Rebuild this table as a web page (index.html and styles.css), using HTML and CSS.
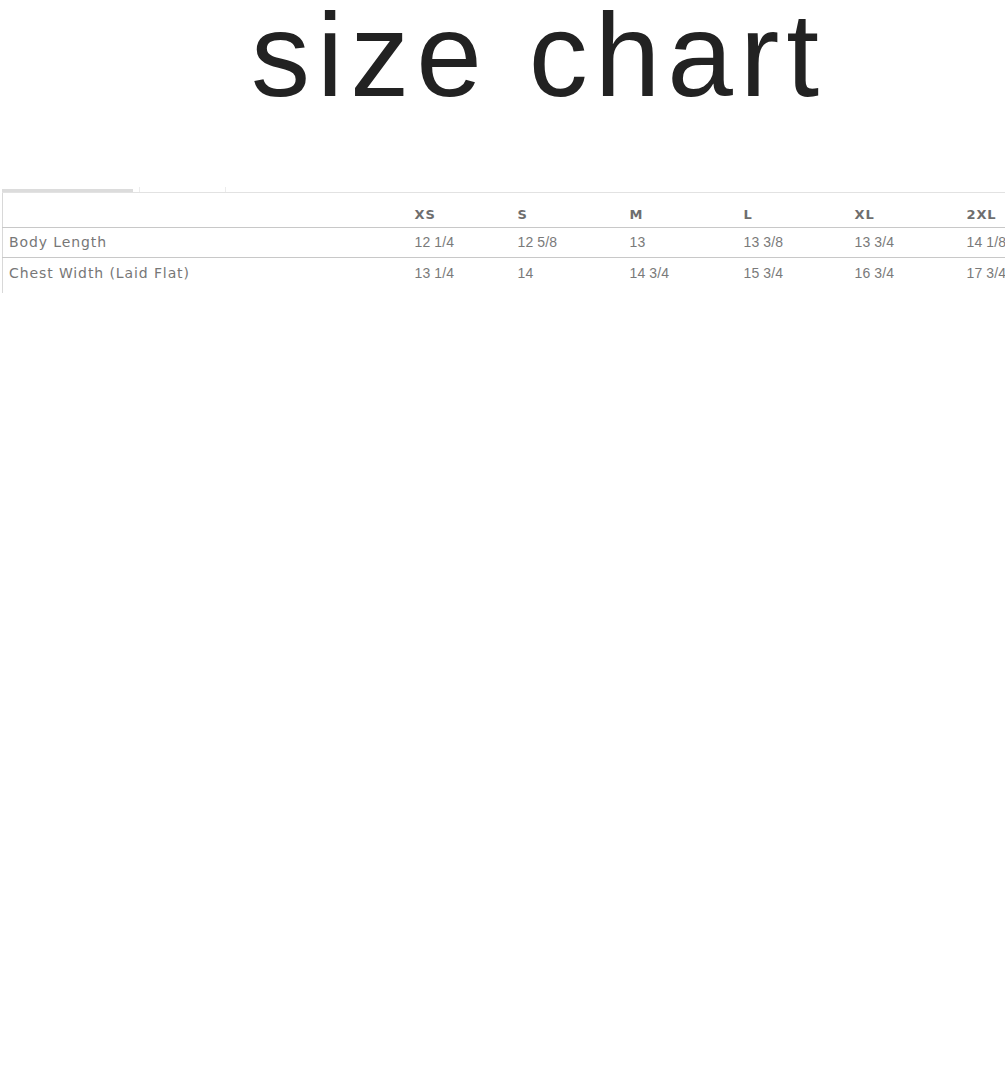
FILE: index.html
```html
<!DOCTYPE html>
<html lang="en">
<head>
<meta charset="utf-8">
<title>size chart</title>
<link rel="stylesheet" href="styles.css">
</head>
<body>
<div class="page">
  <h1 class="title">size chart</h1>
  <div class="tabs">
    <div class="tab tab-active"></div>
    <div class="tab tab-idle"></div>
  </div>
  <div class="table-wrap">
    <table class="chart">
      <colgroup>
        <col class="c-label"><col class="c-xs"><col class="c-s"><col class="c-m"><col class="c-l"><col class="c-xl"><col class="c-2xl">
      </colgroup>
      <thead>
        <tr><th></th><th>XS</th><th>S</th><th>M</th><th>L</th><th>XL</th><th>2XL</th></tr>
      </thead>
      <tbody>
        <tr class="row-first"><td class="label">Body Length</td><td>12 1/4</td><td>12 5/8</td><td>13</td><td>13 3/8</td><td>13 3/4</td><td>14 1/8</td></tr>
        <tr class="row-last"><td class="label">Chest Width (Laid Flat)</td><td>13 1/4</td><td>14</td><td>14 3/4</td><td>15 3/4</td><td>16 3/4</td><td>17 3/4</td></tr>
      </tbody>
    </table>
  </div>
</div>
</body>
</html>
```
FILE: styles.css
```css
html, body {
  margin: 0;
  padding: 0;
  background: #fff;
  overflow-x: hidden;
}
.page {
  width: 1005px;
  overflow: hidden;
}
.title {
  margin: 0;
  padding-left: 251px;
  font-family: "Liberation Sans", Arial, sans-serif;
  font-weight: 400;
  font-size: 118px;
  line-height: 110px;
  height: 110px;
  letter-spacing: 7px;
  color: #222;
  white-space: nowrap;
}
.tabs {
  display: flex;
  align-items: flex-end;
  margin-top: 77px;
  padding-left: 2px;
  height: 5px;
}
.tab {
  height: 3px;
}
.tab-active {
  width: 131px;
  background: #dcdcdc;
}
.tab-idle {
  width: 85px;
  height: 5px;
  margin-left: 6px;
  border-left: 1px solid #ececec;
  border-right: 1px solid #ececec;
}
.table-wrap {
  padding-left: 2px;
  width: 1100px;
}
.chart {
  border-collapse: collapse;
  table-layout: fixed;
  width: 1100px;
  border-top: 1px solid #e2e2e2;
  border-left: 1px solid #d8d8d8;
  font-family: "Liberation Sans", Arial, sans-serif;
  font-size: 14px;
  line-height: 17px;
  letter-spacing: 0.1px;
  color: #7a7a7a;
}
.c-label { width: 406px; }
.c-xs { width: 103px; }
.c-s { width: 112px; }
.c-m { width: 114px; }
.c-l { width: 111px; }
.c-xl { width: 112px; }
.c-2xl { width: 142px; }
.chart th, .chart td {
  box-sizing: border-box;
  text-align: left;
  padding: 0 0 0 6px;
  white-space: nowrap;
}
.chart .label {
  font-family: "DejaVu Sans", "Liberation Sans", sans-serif;
  letter-spacing: 0.9px;
  color: #777;
}
.chart th {
  font-family: "DejaVu Sans", "Liberation Sans", sans-serif;
  font-weight: 700;
  font-size: 13px;
  letter-spacing: 0.9px;
  color: #6e6e6e;
  height: 35px;
  vertical-align: bottom;
  padding-bottom: 4px;
  border-bottom: 1px solid #c8c8c8;
}
.row-first td {
  height: 30px;
  vertical-align: middle;
  border-bottom: 1px solid #c8c8c8;
}
.row-last td {
  height: 35px;
  vertical-align: middle;
  padding-bottom: 3px;
}
```
